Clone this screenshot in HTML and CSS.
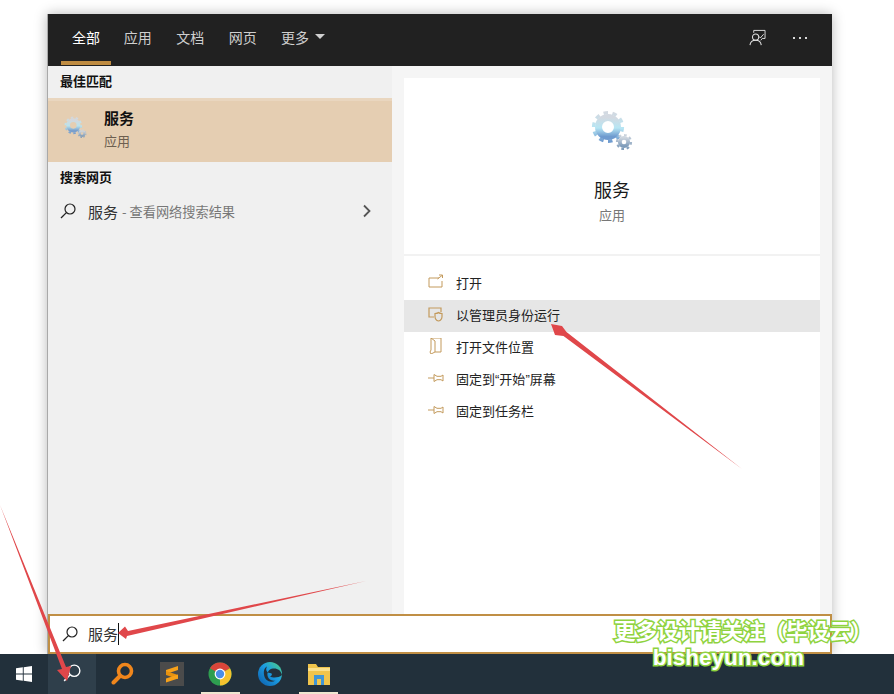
FILE: index.html
```
<!DOCTYPE html>
<html lang="zh-CN">
<head>
<meta charset="utf-8">
<title>搜索 - 服务</title>
<link rel="stylesheet" href="styles.css">
</head>
<body>
<svg class="defs" width="0" height="0" aria-hidden="true">
  <defs>
    <linearGradient id="gearFill" x1="0" y1="0" x2="0" y2="1">
      <stop offset="0" stop-color="#d3d9e1"/>
      <stop offset=".55" stop-color="#b6e6f4"/>
      <stop offset="1" stop-color="#6f9bcf"/>
    </linearGradient>
    <linearGradient id="gearSmall" x1="0" y1="0" x2="0" y2="1">
      <stop offset="0" stop-color="#cdd5de"/>
      <stop offset="1" stop-color="#7d9bba"/>
    </linearGradient>
    <linearGradient id="edgeFill" x1="0" y1="1" x2="1" y2="0">
      <stop offset="0" stop-color="#0c59a8"/>
      <stop offset=".55" stop-color="#1b9de2"/>
      <stop offset="1" stop-color="#54d37a"/>
    </linearGradient>
    <symbol id="gears" viewBox="0 0 42 40">
      <circle cx="17" cy="17" r="14.4" fill="none" stroke="url(#gearFill)" stroke-width="3.4" pathLength="20" stroke-dasharray="1 1"/>
      <circle cx="17" cy="17" r="9.5" fill="none" stroke="url(#gearFill)" stroke-width="7"/>
      <circle cx="33" cy="32" r="7" fill="none" stroke="url(#gearSmall)" stroke-width="2.200" pathLength="16" stroke-dasharray="1 1"/>
      <circle cx="33" cy="32" r="4.200" fill="none" stroke="url(#gearSmall)" stroke-width="3.800"/>
    </symbol>
    <symbol id="lens" viewBox="0 0 16 16">
      <circle cx="10" cy="6" r="5" fill="none" stroke="currentColor" stroke-width="1.2"/>
      <path d="M6.4 9.6 1 15" fill="none" stroke="currentColor" stroke-width="1.3"/>
    </symbol>
    <symbol id="pin" viewBox="0 0 16 16">
      <path d="M0 8h6M6 4.500l3 1.800h4l2-1.300v6l-2-1.300H9l-3 1.800z" fill="none" stroke="#c39a5c" stroke-width="1"/>
    </symbol>
  </defs>
</svg>

<div class="desktop">
  <main class="stage">
    <section class="panel">
      <nav class="tabs">
        <span class="tab tab-active">全部</span>
        <span class="tab">应用</span>
        <span class="tab">文档</span>
        <span class="tab">网页</span>
        <span class="tab tab-more">更多<i class="caret"></i></span>
        <span class="tabs-tools">
          <svg class="tool-icon" viewBox="0 0 18 18" aria-hidden="true">
            <path d="M5 4V1.500h12V10h-3l-1.500 2" fill="none" stroke="#e0e0e0" stroke-width="1"/>
            <path d="M15.500 5.500 12 9.500 10.800 8" fill="none" stroke="#e0e0e0" stroke-width="1"/>
            <circle cx="7" cy="8.500" r="3.300" fill="none" stroke="#e0e0e0" stroke-width="1.100"/>
            <path d="M1 17c.5-3.500 3-5 6-5s5.500 1.500 6 5" fill="none" stroke="#e0e0e0" stroke-width="1.100"/>
          </svg>
          <span class="dots"><i></i><i></i><i></i></span>
        </span>
      </nav>
      <div class="columns">
        <div class="results">
          <h2 class="group-title">最佳匹配</h2>
          <div class="best">
            <svg class="best-icon"><use href="#gears"/></svg>
            <div class="best-text">
              <strong>服务</strong>
              <span>应用</span>
            </div>
          </div>
          <h2 class="group-title">搜索网页</h2>
          <div class="web-row">
            <svg class="lens-icon"><use href="#lens"/></svg>
            <span class="web-term">服务</span>
            <span class="web-hint">- 查看网络搜索结果</span>
            <svg class="chevron" viewBox="0 0 10 14" aria-hidden="true"><path d="M2 1.500 7.500 7 2 12.500" fill="none" stroke="#555" stroke-width="1.800"/></svg>
          </div>
        </div>
        <div class="detail">
          <div class="card">
            <div class="hero">
              <svg class="hero-icon"><use href="#gears"/></svg>
              <div class="hero-name">服务</div>
              <div class="hero-kind">应用</div>
            </div>
            <ul class="actions">
              <li class="action">
                <svg class="action-icon" viewBox="0 0 16 16" aria-hidden="true"><path d="M11 4H1v9h13V7M9.500 5 14 1.500M11 1h3.500v3" fill="none" stroke="#c39a5c" stroke-width="1"/></svg>
                <span>打开</span>
              </li>
              <li class="action action-hover">
                <svg class="action-icon" viewBox="0 0 16 16" aria-hidden="true"><path d="M6 11H1V2h12v4" fill="none" stroke="#c39a5c" stroke-width="1.200"/><path d="M7 7.500c2 0 3-.5 3.500-1 .5.500 1.500 1 3.500 1v3c0 2.500-1.500 4-3.500 4.500C8.500 14.500 7 13 7 10.500z" fill="none" stroke="#c39a5c" stroke-width="1.200"/></svg>
                <span>以管理员身份运行</span>
              </li>
              <li class="action">
                <svg class="action-icon" viewBox="0 0 16 16" aria-hidden="true"><path d="M3 0h10v14H7M3 0v12l-1 2 1 2 4-2V3z" fill="none" stroke="#c39a5c" stroke-width="1"/></svg>
                <span>打开文件位置</span>
              </li>
              <li class="action">
                <svg class="action-icon"><use href="#pin"/></svg>
                <span>固定到<span class="quote">“</span>开始<span class="quote">”</span>屏幕</span>
              </li>
              <li class="action">
                <svg class="action-icon"><use href="#pin"/></svg>
                <span>固定到任务栏</span>
              </li>
            </ul>
          </div>
        </div>
      </div>
      <div class="searchbox">
        <svg class="lens-icon"><use href="#lens"/></svg>
        <span class="query">服务</span><i class="cursor"></i>
      </div>
    </section>
  </main>

  <footer class="taskbar">
    <span class="task">
      <svg class="task-win" viewBox="0 0 16 16" aria-hidden="true"><path d="M0 2.300 6.800 1.300v6.300H0zM7.700 1.200 16 0v7.600H7.700zM0 8.400h6.800v6.300L0 13.700zM7.700 8.400H16V16L7.700 14.800z" fill="#fff"/></svg>
    </span>
    <span class="task task-on">
      <svg class="task-search"><use href="#lens"/></svg>
    </span>
    <span class="task task-lead">
      <svg class="task-icon" viewBox="0 0 24 24" aria-hidden="true"><circle cx="14" cy="9" r="6.500" fill="none" stroke="#f0861c" stroke-width="3.600"/><path d="M9 14 2.500 20.500" stroke="#f0861c" stroke-width="4" stroke-linecap="round"/></svg>
    </span>
    <span class="task">
      <svg class="task-icon" viewBox="0 0 24 24" aria-hidden="true"><rect width="24" height="24" fill="#4b4b4b"/><path d="M18 4 6 8v4l12-4z" fill="#f7a11a"/><path d="M6 9l12 4v4L6 13z" fill="#e8920f"/><path d="M18 12.500v4L6 20.500v-4z" fill="#f7a11a"/></svg>
    </span>
    <span class="task task-bar">
      <svg class="task-icon" viewBox="0 0 24 24" aria-hidden="true">
        <circle cx="12" cy="12" r="11.500" fill="#2e9e50"/>
        <path d="M12 12 2 6.300A11.500 11.500 0 0 1 22 6.300z" fill="#d9453a"/>
        <path d="M12 12 22 6.300A11.500 11.500 0 0 1 12 23.500z" fill="#f5c22e"/>
        <circle cx="12" cy="12" r="5.400" fill="#fff"/>
        <circle cx="12" cy="12" r="4.200" fill="#4a8ee8"/>
      </svg>
    </span>
    <span class="task task-wide">
      <svg class="task-icon" viewBox="0 0 24 24" aria-hidden="true">
        <circle cx="12" cy="12" r="12" fill="url(#edgeFill)"/>
        <path d="M24 13c-1-5-5-7-9-6.500-4 .500-6 3.500-5.500 7 .5 3.500 4 6 8 5-5 3-11 0-11.500-6C5.500 8 6.500 6 9 4.500 7 8 9 11 12 11c3 0 2 3 0 3.500 3 1.500 8.500 1.500 12-1.500z" fill="#22303b"/>
      </svg>
    </span>
    <span class="task task-bar task-last">
      <svg class="task-icon" viewBox="0 0 24 24" aria-hidden="true">
        <path d="M1 2h8l2 3h12v18H1z" fill="#f0c44c"/>
        <path d="M1 6h22v3H1z" fill="#fbe08b"/>
        <path d="M7 13h10v10h-3v-6h-4v6H7z" fill="#3f95d6"/>
      </svg>
    </span>
  </footer>

  <svg class="arrows" viewBox="0 0 894 694" aria-hidden="true">
    <path d="M742 469 566.500 332 562 326 551 324 555 335 563.500 336z" fill="#e0474a"/>
    <path d="M366 581 128 631 125 626.500 118 633 126 639 127 636z" fill="#e0474a"/>
    <path d="M0 505 66 667 71 666 67 681 57 670 62 669z" fill="#e0474a"/>
  </svg>

  <div class="watermark">
    <div class="wm-cn">更多设计请关注（毕设云）</div>
    <div class="wm-en">bisheyun.com</div>
  </div>
</div>
</body>
</html>
```
FILE: styles.css
```
* { box-sizing: border-box; }
html, body { margin: 0; padding: 0; }
body {
  width: 894px;
  height: 694px;
  overflow: hidden;
  background: #fff;
  font-family: "Noto Sans CJK SC", "Noto Sans", sans-serif;
  color: #111;
}
.defs { position: absolute; }
.desktop { position: relative; width: 894px; height: 694px; display: flex; flex-direction: column; overflow: hidden; }

.stage { height: 654px; padding: 14px 0 0 47px; }
.panel {
  width: 785px;
  height: 640px;
  display: flex;
  flex-direction: column;
  border-left: 1px solid #a9a9a9;
  background: #f5f5f5;
  box-shadow: 0 0 12px rgba(0, 0, 0, .28);
}

/* header */
.tabs { height: 52px; flex: none; display: flex; align-items: flex-start; padding-left: 13px; background: #212121; color: #cfcfcf; font-size: 14px; }
.tab { width: 52.500px; height: 51px; padding: 0 0 2px 1px; display: flex; align-items: center; justify-content: center; border-bottom: 4px solid transparent; }
.tab-active { width: 50px; padding-left: 0; color: #fff; border-bottom-color: #bf8c42; }
.tab-more { width: 62px; margin-left: 3px; gap: 6px; }
.caret { width: 0; height: 0; border: 5px solid transparent; border-top: 5px solid #cfcfcf; border-bottom: 0; }
.tabs-tools { margin-left: auto; height: 47px; display: flex; align-items: center; gap: 27px; padding-right: 25px; }
.tool-icon { width: 17px; height: 17px; }
.dots { display: flex; gap: 4px; }
.dots i { width: 2px; height: 2px; background: #d8d8d8; }

/* columns */
.columns { flex: 1; min-height: 0; display: flex; }
.results { width: 344px; background: #f0f0f0; }
.group-title { margin: 0; height: 32px; padding: 7px 0 0 12px; font-size: 13px; line-height: 16px; font-weight: 700; color: #111; }
.best { height: 64px; display: flex; align-items: center; padding-left: 16px; background: #e5ceb2; border-top: 3px solid #e9d6bf; }
.best-icon { width: 23px; height: 22px; margin-top: -9px; opacity: .9; }
.best-text { margin-left: 17px; display: flex; flex-direction: column; margin-top: -5px; }
.best-text strong { font-size: 15px; line-height: 22px; font-weight: 700; color: #111; }
.best-text span { font-size: 13px; line-height: 20px; margin-top: 2px; color: #6d5f50; }
.web-row { height: 36px; display: flex; align-items: center; padding: 0 0 2px 12px; }
.lens-icon { width: 16px; height: 16px; color: #222; flex: none; }
.web-term { margin-left: 12px; font-size: 15px; color: #333; }
.web-hint { margin-left: 4px; font-size: 13.200px; color: #777; }
.chevron { width: 10px; height: 14px; margin-left: auto; margin-right: 20px; }

/* detail */
.detail { flex: 1; padding: 12px 12px 0; }
.card { height: 100%; background: #fff; }
.hero { height: 178px; padding-top: 32px; display: flex; flex-direction: column; align-items: center; border-bottom: 2px solid #f2f2f2; }
.hero-icon { width: 42px; height: 40px; }
.hero-name { margin-top: 26px; font-size: 18px; line-height: 26px; color: #1a1a1a; }
.hero-kind { margin-top: 3px; font-size: 13px; line-height: 20px; color: #777; }
.actions { list-style: none; margin: 0; padding: 12px 0 0; }
.action { height: 32px; display: flex; align-items: center; padding: 0 0 3px 24px; font-size: 13px; color: #222; }
.action-hover { background: #e6e6e6; }
.action-icon { width: 16px; height: 16px; margin-right: 12px; margin-top: -1px; flex: none; }
.quote { font-family: "Liberation Sans", sans-serif; }

/* search */
.searchbox { height: 40px; flex: none; display: flex; align-items: center; padding-left: 12px; background: #fff; border: 2px solid #c08f45; }
.query { margin-left: 10px; padding-bottom: 2px; font-size: 15px; color: #333; }
.cursor { width: 1px; height: 22px; background: #111; }

/* taskbar */
.taskbar { height: 40px; flex: none; display: flex; background: #22303b; }
.task { width: 48px; height: 40px; display: flex; align-items: center; justify-content: center; }
.task-lead { width: 50px; margin-left: 2px; }
.task-wide { width: 52px; }
.task-on { background: #2f3f4b; }
.task-bar { position: relative; }
.task-bar::after { content: ""; position: absolute; left: 5px; right: 4px; bottom: 0; height: 2px; background: #efe6d0; }
.task-last { width: 46px; }
.task-last::after { left: 3px; right: 4px; }
.task-win { width: 16px; height: 16px; }
.task-search { width: 18px; height: 18px; color: #fff; margin-top: -3px; }
.task-icon { width: 24px; height: 24px; }

/* annotations */
.arrows { position: absolute; left: 0; top: 0; width: 894px; height: 694px; pointer-events: none; }
.watermark { position: absolute; left: 603px; top: 617px; width: 280px; text-align: center; font-weight: 700; color: #fff; }
.wm-cn { font-size: 21.500px; line-height: 26px; -webkit-text-stroke: 3px #8fd33f; paint-order: stroke fill; }
.wm-en { font-family: "Liberation Sans", sans-serif; font-size: 22.500px; line-height: 26px; margin-top: 2px; margin-left: -29px; -webkit-text-stroke: 3px #8fd33f; paint-order: stroke fill; }
```
